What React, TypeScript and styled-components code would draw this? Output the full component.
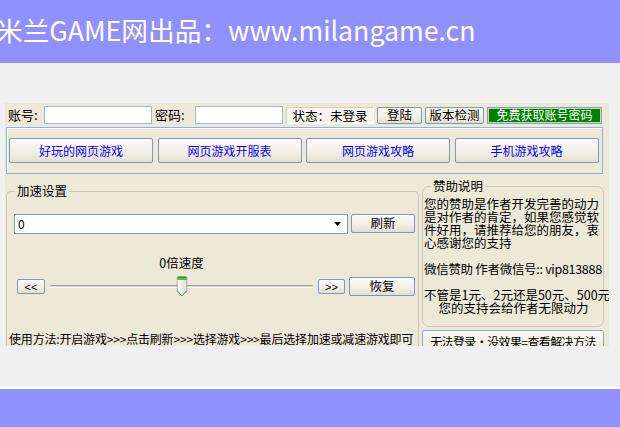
import React from "react"
import styled, { createGlobalStyle } from "styled-components"

const cjk = `"Noto Sans CJK SC", "Liberation Sans", sans-serif`

const GlobalStyle = createGlobalStyle`
  *, *::before, *::after { box-sizing: border-box; }
  html, body { margin: 0; padding: 0; }
  body { background: #f0f0f0; font-family: ${cjk}; }
`

const Page = styled.div`
  width: 620px;
  height: 427px;
  display: flex;
  flex-direction: column;
  overflow: hidden;
`

const Header = styled.header`
  height: 63px;
  flex-shrink: 0;
  background: #9090ff;
  display: flex;
  align-items: center;
  white-space: nowrap;
`

const HeaderTitle = styled.h1`
  margin: 0 0 2px -4px;
  font: 400 26.7px/1.2 ${cjk};
  color: #fff;
`

const Stage = styled.main`
  flex: 1;
  padding: 40px 0 0 5px;
`

const Footer = styled.footer`
  height: 40px;
  flex-shrink: 0;
  border-top: 2px solid #fff;
  background: #9090ff;
`

const Window = styled.div`
  width: 604px;
  height: 243px;
  background: #ece9d8;
  overflow: hidden;
  padding: 3px 0 0 1px;
  font: 12px/1.2 ${cjk};
  color: #000;
`

const LoginBar = styled.div`
  display: flex;
  align-items: center;
  gap: 3px;
  height: 18px;
  padding-left: 2px;
`

const FieldLabel = styled.span<{ $w: number }>`
  width: ${(p) => p.$w}px;
  font-size: 13px;
  white-space: nowrap;
`

const TextInput = styled.input<{ $w: number }>`
  width: ${(p) => p.$w}px;
  height: 18px;
  border: 1px solid #9fb8d3;
  background: #fff;
  padding: 0 2px;
  font: 12px ${cjk};
  outline: none;
`

const StatusBox = styled.div`
  width: 88px;
  height: 17px;
  background: #f6f5f0;
  border: 1px solid;
  border-color: #d4d0c0 #fff #fff #d4d0c0;
  font-size: 12.5px;
  line-height: 15px;
  text-align: center;
  white-space: nowrap;
`

const XpButton = styled.button<{ $w: number; $h: number; $fs?: number }>`
  width: ${(p) => p.$w}px;
  height: ${(p) => p.$h}px;
  flex-shrink: 0;
  padding: 0;
  border: 1px solid #8097b5;
  border-radius: 2px;
  background: linear-gradient(#fbfaf5, #f1efe5 60%, #e2ded0);
  font: ${(p) => p.$fs ?? 12.5}px/1 ${cjk};
  color: #000;
  white-space: nowrap;
  cursor: pointer;
`

const GreenButton = styled.button`
  width: 115px;
  height: 17px;
  padding: 0;
  border: 1px solid #8a9fb8;
  box-shadow: inset 0 0 0 1px #c8d8c8;
  background: #008000;
  color: #fff;
  font: 12px/1 ${cjk};
  white-space: nowrap;
`

const NavGroup = styled.nav`
  margin-top: 3px;
  width: 597px;
  height: 47px;
  border: 1px solid #94b2d6;
  box-shadow: inset 1px 1px 0 #fff;
  padding: 10px 0 0 2px;
  display: grid;
  grid-template-columns: repeat(4, 144px);
  column-gap: 4.5px;
  align-items: start;
`

const NavButton = styled(XpButton)`
  color: #0000ff;
  font-size: 12px;
`

const Columns = styled.div`
  display: flex;
  align-items: flex-start;
  gap: 3px;
  margin-top: 4px;
`

const GroupBox = styled.fieldset<{ $w: number; $h: number; $r: number; $mt?: number }>`
  width: ${(p) => p.$w}px;
  height: ${(p) => p.$h}px;
  margin: ${(p) => p.$mt ?? 0}px 0 0;
  padding: 0;
  min-width: 0;
  border: 1px solid #c9c7b6;
  border-radius: ${(p) => p.$r}px;
  flex-shrink: 0;
`

const GroupTitle = styled.legend`
  margin-left: 8px;
  padding: 0 2px;
  font-size: 12.5px;
  line-height: 16px;
`

const SpeedBody = styled.div`
  padding: 15px 0 0 7px;
`

const ComboRow = styled.div`
  display: flex;
  align-items: flex-start;
  gap: 3px;
`

const Combo = styled.div`
  width: 334px;
  height: 20px;
  background: #fff;
  border: 1px solid #7f9db9;
  display: flex;
  align-items: center;
  justify-content: space-between;
  padding: 0 6px 0 3px;
  font-size: 12px;
`

const SpeedLabel = styled.div`
  margin: 22px 0 0 36px;
  width: 263px;
  text-align: center;
  line-height: 14px;
  font-size: 12.5px;
`

const SliderRow = styled.div`
  margin: 6px 0 0 3px;
  display: flex;
  align-items: center;
  gap: 5px;
`

const ArrowButton = styled(XpButton)`
  font-family: "Liberation Sans", sans-serif;
  letter-spacing: 0;
  line-height: 12px;
`

const Track = styled.div`
  position: relative;
  width: 263px;
  height: 21px;

  &::before {
    content: "";
    position: absolute;
    left: 0;
    right: 0;
    top: 9px;
    height: 3px;
    border-radius: 2px;
    border-top: 1px solid #a3a296;
    border-bottom: 1px solid #fff;
    background: #dcd9cb;
  }
`

const ThumbHolder = styled.div`
  position: absolute;
  top: 0;
  transform: translateX(-50%);
  line-height: 0;
`

const Usage = styled.p`
  margin: 34px 0 0 -5px;
  font-size: 12px;
  line-height: 16px;
  white-space: nowrap;
  letter-spacing: -0.18px;
`

const RightColumn = styled.div`
  display: flex;
  flex-direction: column;
  gap: 3px;
`

const SponsorBody = styled.div`
  padding: 3px 0 0 1px;
  font-size: 12.5px;
  line-height: 13px;
`

const SponsorLine = styled.div<{ $center?: boolean; $tight?: boolean }>`
  height: 13px;
  white-space: nowrap;
  text-align: ${(p) => (p.$center ? "center" : "left")};
  letter-spacing: ${(p) => (p.$tight ? "-0.3px" : "0")};
`

const HelpButton = styled(XpButton)`
  border-color: #8eaad0;
  letter-spacing: -0.6px;
`

const Thumb = () => (
  <svg width="11" height="21" viewBox="0 0 11 21">
    <defs>
      <linearGradient id="thumbBody" x1="0" x2="1" y1="0" y2="0">
        <stop offset="0" stopColor="#ffffff" />
        <stop offset="1" stopColor="#dcdcd4" />
      </linearGradient>
    </defs>
    <path d="M0.5 2 Q0.5 0.5 2 0.5 H9 Q10.5 0.5 10.5 2 V14.5 L5.5 20 L0.5 14.5 Z" fill="url(#thumbBody)" stroke="#8a9a8a" />
    <path d="M5.5 20 L0.5 14.5 M5.5 20 L10.5 14.5" stroke="#4f9a4f" />
    <rect x="1" y="1" width="9" height="3" fill="#47bf47" />
    <rect x="1" y="1" width="9" height="1" fill="#2ea02e" />
  </svg>
)

const sponsorLines = [
  { text: "您的赞助是作者开发完善的动力" },
  { text: "是对作者的肯定，如果您感觉软" },
  { text: "件好用，请推荐给您的朋友，衷" },
  { text: "心感谢您的支持" },
  { text: "" },
  { text: "微信赞助 作者微信号:: vip813888", tight: true },
  { text: "" },
  { text: "不管是1元、2元还是50元、500元" },
]

const navLinks = ["好玩的网页游戏", "网页游戏开服表", "网页游戏攻略", "手机游戏攻略"]

export default function App() {
  return (
    <Page>
      <GlobalStyle />
      <Header>
        <HeaderTitle>米兰GAME网出品：www.milangame.cn</HeaderTitle>
      </Header>
      <Stage>
        <Window>
          <LoginBar>
            <FieldLabel $w={33}>账号:</FieldLabel>
            <TextInput $w={108} />
            <FieldLabel $w={37}>密码:</FieldLabel>
            <TextInput $w={88} type="password" />
            <StatusBox>状态：未登录</StatusBox>
            <XpButton $w={45} $h={17}>登陆</XpButton>
            <XpButton $w={59} $h={17}>版本检测</XpButton>
            <GreenButton>免费获取账号密码</GreenButton>
          </LoginBar>

          <NavGroup>
            {navLinks.map((t) => (
              <NavButton key={t} $w={144} $h={25}>
                {t}
              </NavButton>
            ))}
          </NavGroup>

          <Columns>
            <GroupBox $w={413} $h={220} $r={4} $mt={5}>
              <GroupTitle>加速设置</GroupTitle>
              <SpeedBody>
                <ComboRow>
                  <Combo>
                    <span>0</span>
                    <svg width="7" height="4" viewBox="0 0 7 4">
                      <path d="M0 0 H7 L3.5 4 Z" fill="#000" />
                    </svg>
                  </Combo>
                  <XpButton $w={64} $h={19}>刷新</XpButton>
                </ComboRow>
                <SpeedLabel>0倍速度</SpeedLabel>
                <SliderRow>
                  <ArrowButton $w={28} $h={15} $fs={11}>&lt;&lt;</ArrowButton>
                  <Track>
                    <ThumbHolder style={{ left: "50%" }}>
                      <Thumb />
                    </ThumbHolder>
                  </Track>
                  <ArrowButton $w={27} $h={15} $fs={11}>&gt;&gt;</ArrowButton>
                  <XpButton $w={66} $h={19} style={{ marginLeft: -1 }}>恢复</XpButton>
                </SliderRow>
                <Usage>使用方法:开启游戏&gt;&gt;&gt;点击刷新&gt;&gt;&gt;选择游戏&gt;&gt;&gt;最后选择加速或减速游戏即可</Usage>
              </SpeedBody>
            </GroupBox>

            <RightColumn>
              <GroupBox $w={182} $h={149} $r={7}>
                <GroupTitle>赞助说明</GroupTitle>
                <SponsorBody>
                  {sponsorLines.map((l, i) => (
                    <SponsorLine key={i} $tight={l.tight}>
                      {l.text}
                    </SponsorLine>
                  ))}
                  <SponsorLine $center>您的支持会给作者无限动力</SponsorLine>
                </SponsorBody>
              </GroupBox>
              <HelpButton $w={182} $h={24} $fs={12}>无法登录·没效果=查看解决方法</HelpButton>
            </RightColumn>
          </Columns>
        </Window>
      </Stage>
      <Footer />
    </Page>
  )
}
